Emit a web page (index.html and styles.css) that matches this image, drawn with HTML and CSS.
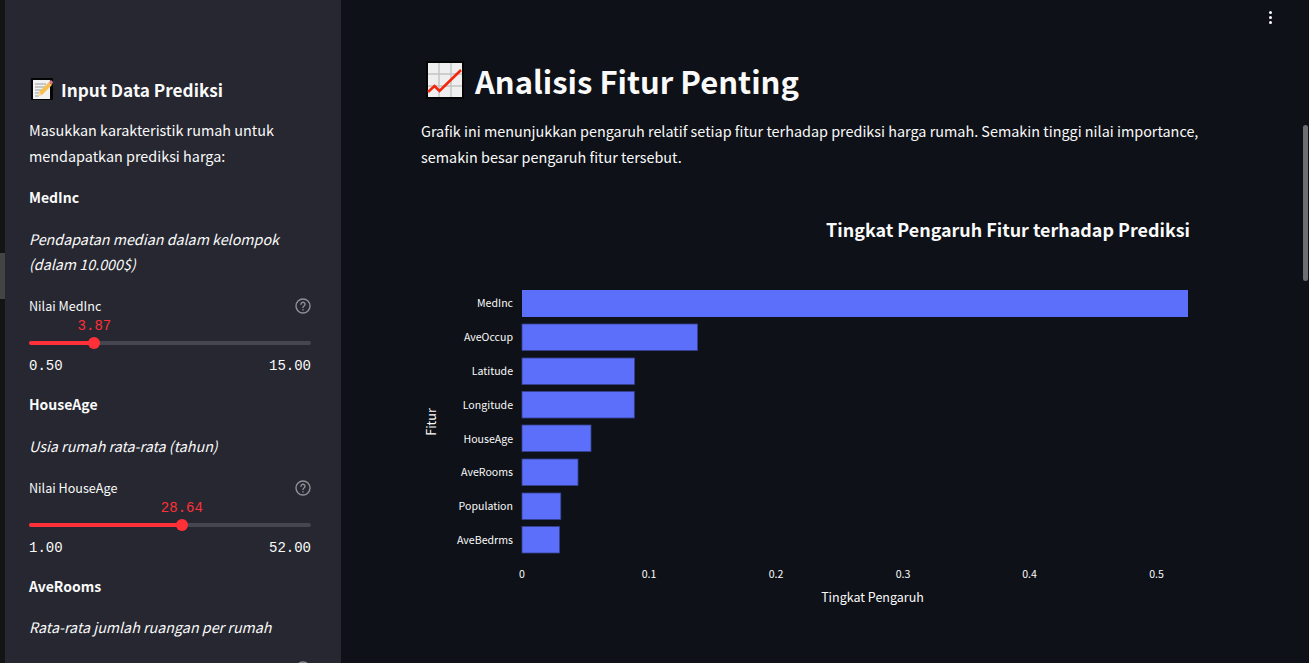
FILE: index.html
```html
<!DOCTYPE html>
<html lang="en">
<head>
  <meta charset="UTF-8" />
  <title>Analisis Fitur Penting</title>
  <link rel="stylesheet" href="styles.css">
</head>
<body>
  <div class="edge"><div class="edge-thumb"></div></div>

  <aside class="sidebar">
    <h3 class="side-title">
      <svg class="emoji-memo" viewBox="0 0 22 22" aria-hidden="true">
        <rect width="22" height="22" fill="#050505"/>
        <rect x="2" y="2" width="17" height="19" fill="#f2f2f2"/>
        <path d="M4 6h11M4 9h10M4 12h7M4 15h5M4 18h4" stroke="#9a9a9a" stroke-width="1"/>
        <path d="M7 18l1-4L18 4l3 3L11 17z" fill="#f6bf4f"/>
        <path d="M7 18l1-4 3 3z" fill="#f3dcae"/>
        <path d="M18 4l2-2 2 2-1 3z" fill="#d9748a"/>
      </svg>
      Input Data Prediksi
    </h3>
    <p class="side-text">Masukkan karakteristik rumah untuk mendapatkan prediksi harga:</p>

    <section class="feature">
      <h4 class="feature-name">MedInc</h4>
      <p class="feature-desc">Pendapatan median dalam kelompok (dalam 10.000$)</p>
      <div class="slider">
        <div class="slider-label">
          <span>Nilai MedInc</span>
          <svg class="help" viewBox="0 0 16 16" aria-hidden="true"><circle cx="8" cy="8" r="7"/><path d="M6 6.300a2 2 0 1 1 3 1.700c-.7.4-1 .8-1 1.500"/><path d="M8 11.600v.4"/></svg>
        </div>
        <div class="track">
          <div class="fill" style="width: 23.2%"></div>
          <div class="thumb" style="left: 23.2%"><span class="thumb-value">3.87</span></div>
        </div>
        <div class="range"><span>0.50</span><span>15.00</span></div>
      </div>
    </section>

    <section class="feature">
      <h4 class="feature-name">HouseAge</h4>
      <p class="feature-desc">Usia rumah rata-rata (tahun)</p>
      <div class="slider">
        <div class="slider-label">
          <span>Nilai HouseAge</span>
          <svg class="help" viewBox="0 0 16 16" aria-hidden="true"><circle cx="8" cy="8" r="7"/><path d="M6 6.300a2 2 0 1 1 3 1.700c-.7.4-1 .8-1 1.500"/><path d="M8 11.600v.4"/></svg>
        </div>
        <div class="track">
          <div class="fill" style="width: 54.2%"></div>
          <div class="thumb" style="left: 54.2%"><span class="thumb-value">28.64</span></div>
        </div>
        <div class="range"><span>1.00</span><span>52.00</span></div>
      </div>
    </section>

    <section class="feature">
      <h4 class="feature-name">AveRooms</h4>
      <p class="feature-desc">Rata-rata jumlah ruangan per rumah</p>
      <div class="slider">
        <div class="slider-label">
          <svg class="help" viewBox="0 0 16 16" aria-hidden="true"><circle cx="8" cy="8" r="7"/><path d="M6 6.300a2 2 0 1 1 3 1.700c-.7.4-1 .8-1 1.500"/><path d="M8 11.600v.4"/></svg>
        </div>
      </div>
    </section>
  </aside>

  <main class="main">
    <button class="menu" aria-label="Menu"><span></span><span></span><span></span></button>
    <div class="main-thumb"></div>

    <h1 class="page-title">
      <svg class="emoji-chart" viewBox="0 0 38 38" aria-hidden="true">
        <rect width="38" height="38" fill="#050505"/>
        <rect x="2" y="2" width="34" height="34" fill="#efefef"/>
        <path d="M13 2v34M25 2v34M2 13h34M2 25h34" stroke="#c4c4c4" stroke-width="1.400"/>
        <path d="M2 31l6.500-6 5 5L35 9" fill="none" stroke="#f4260c" stroke-width="2.600"/>
      </svg>
      Analisis Fitur Penting
    </h1>
    <p class="intro">Grafik ini menunjukkan pengaruh relatif setiap fitur terhadap prediksi harga rumah. Semakin tinggi nilai importance, semakin besar pengaruh fitur tersebut.</p>

    <svg class="chart" viewBox="0 0 775 410" width="775" height="410">
      <text class="chart-title" x="769" y="23" text-anchor="end">Tingkat Pengaruh Fitur terhadap Prediksi</text>

      <text class="axis-title" transform="translate(15 208) rotate(-90)" text-anchor="middle">Fitur</text>

      <g class="bars">
        <rect class="bar-top" x="101" y="76" width="666" height="27"/>
        <rect x="101" y="110" width="175.500" height="26.500"/>
        <rect x="101" y="144" width="112.500" height="26.500"/>
        <rect x="101" y="177.500" width="112.300" height="26.500"/>
        <rect x="101" y="211" width="69" height="26.500"/>
        <rect x="101" y="245" width="56" height="26.500"/>
        <rect x="101" y="279" width="38.800" height="26.500"/>
        <rect x="101" y="312.500" width="37.500" height="26.500"/>
      </g>

      <g class="tick" text-anchor="end">
        <text x="92" y="93">MedInc</text>
        <text x="92" y="127">AveOccup</text>
        <text x="92" y="160.500">Latitude</text>
        <text x="92" y="194.500">Longitude</text>
        <text x="92" y="228.500">HouseAge</text>
        <text x="92" y="261.500">AveRooms</text>
        <text x="92" y="295.500">Population</text>
        <text x="92" y="329.500">AveBedrms</text>
      </g>

      <g class="tick" text-anchor="middle">
        <text x="101" y="364">0</text>
        <text x="228" y="364">0.1</text>
        <text x="355" y="364">0.2</text>
        <text x="482" y="364">0.3</text>
        <text x="608.500" y="364">0.4</text>
        <text x="735.500" y="364">0.5</text>
      </g>

      <text class="axis-title" x="451.500" y="388" text-anchor="middle">Tingkat Pengaruh</text>
    </svg>
  </main>
</body>
</html>
```

FILE: styles.css
```css
/* Reset and base */
* {
  box-sizing: border-box;
  margin: 0;
  padding: 0;
}

html, body {
  height: 100%;
  overflow: hidden;
}

body {
  display: flex;
  background: #0e1117;
  color: #fafafa;
  font-family: "Noto Sans CJK SC", "Noto Sans", sans-serif;
  font-size: 14.4px;
}

/* Strip of the window behind the sidebar */
.edge {
  position: relative;
  flex: 0 0 5px;
  background: #141414;
}

.edge-thumb {
  position: absolute;
  top: 253px;
  left: 0;
  width: 5px;
  height: 46px;
  background: #444;
}

/* Sidebar */
.sidebar {
  flex: 0 0 336px;
  background: #262730;
  padding: 75px 30px 0 24px;
  overflow: hidden;
}

.side-title {
  display: flex;
  align-items: center;
  gap: 8px;
  height: 28px;
  margin-left: 2px;
  font-size: 17.2px;
  font-weight: 700;
}

.emoji-memo {
  width: 22px;
  height: 22px;
}

.side-text {
  margin-top: 13.700px;
  line-height: 26px;
}

.feature {
  margin-top: 15.300px;
}

.feature + .feature {
  margin-top: 16.700px;
}

.feature-name {
  font-size: 14px;
  font-weight: 700;
  line-height: 27px;
}

.feature-desc {
  margin-top: 14.700px;
  font-size: 14.300px;
  font-style: italic;
  line-height: 25.600px;
}

.slider {
  margin-top: 15.600px;
}

.slider-label {
  display: flex;
  align-items: center;
  justify-content: space-between;
  height: 26px;
  font-size: 12.600px;
}

.help {
  width: 16px;
  height: 16px;
  margin-top: 1px;
  margin-left: auto;
  fill: none;
  stroke: #8f9096;
  stroke-width: 1.400;
  stroke-linecap: round;
}

.track {
  position: relative;
  height: 4px;
  margin-top: 22.500px;
  border-radius: 2px;
  background: #45464f;
}

.fill {
  height: 100%;
  border-radius: 2px;
  background: #ff3038;
}

.thumb {
  position: absolute;
  top: -4px;
  width: 12px;
  height: 12px;
  margin-left: -6px;
  border-radius: 50%;
  background: #ff3038;
}

.thumb-value,
.range {
  font-family: "Liberation Mono", monospace;
  font-size: 14px;
}

.thumb-value {
  position: absolute;
  bottom: 15px;
  left: 50%;
  transform: translateX(-50%);
  color: #ff3038;
  line-height: 16px;
}

.range {
  display: flex;
  justify-content: space-between;
  margin-top: 13.500px;
  line-height: 16px;
}

/* Main column */
.main {
  position: relative;
  flex: 1;
  padding: 55px 0 0 80px;
  overflow: hidden;
}

.menu {
  position: absolute;
  top: 11px;
  left: 928px;
  display: flex;
  flex-direction: column;
  gap: 2px;
  background: none;
  border: none;
}

.menu span {
  width: 3px;
  height: 3px;
  border-radius: 50%;
  background: #fafafa;
}

.main-thumb {
  position: absolute;
  top: 125px;
  right: 1px;
  width: 5px;
  height: 156px;
  border-radius: 3px;
  background: #6d6e72;
}

.page-title {
  display: flex;
  align-items: center;
  gap: 11px;
  height: 50px;
  margin-left: 5px;
  font-size: 31px;
  font-weight: 700;
}

.emoji-chart {
  width: 38px;
  height: 38px;
}

.intro {
  width: 790px;
  margin-top: 12.500px;
  line-height: 26px;
}

.chart {
  display: block;
  margin-top: 44.500px;
  overflow: visible;
}

.chart text {
  fill: #fafafa;
}

.chart-title {
  font-size: 17.900px;
  font-weight: 700;
}

.axis-title {
  font-size: 12.500px;
}

.tick {
  font-size: 10.600px;
}

.bars rect {
  fill: #5b6ffb;
  stroke: #36418f;
  stroke-width: 0.8;
}

.bars .bar-top {
  stroke: none;
}
```
